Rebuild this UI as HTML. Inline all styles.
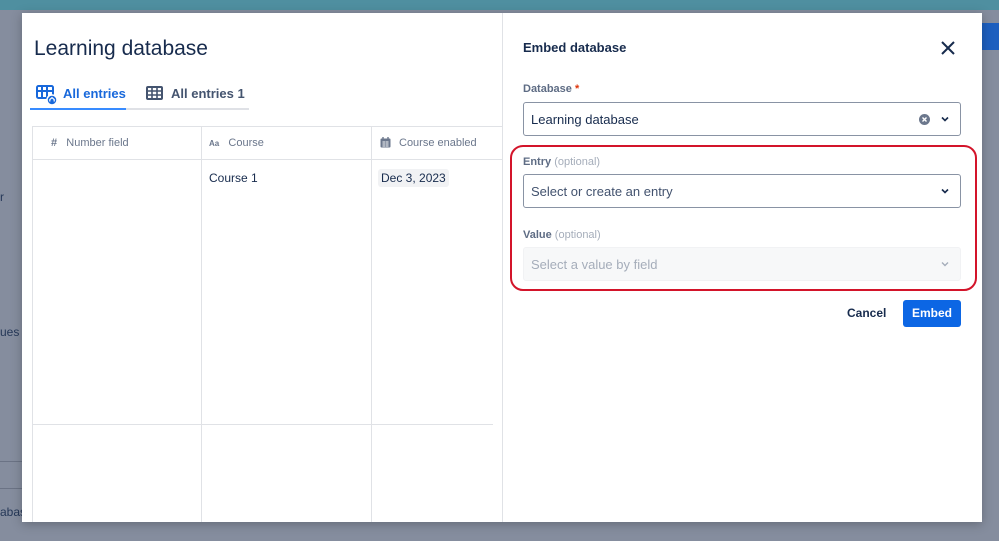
<!DOCTYPE html>
<html><head><style>
*{box-sizing:border-box;margin:0;padding:0}
body{width:999px;height:541px;overflow:hidden;background:#858d9e;font-family:"Liberation Sans",sans-serif;position:relative;color:#172b4d}
.top{position:absolute;left:0;top:0;width:999px;height:10px;background:#4f8fa0}
.modal{position:absolute;left:22px;top:13px;width:960px;height:509px;background:#fff;box-shadow:0 2px 10px rgba(0,0,0,.25)}
.abs{position:absolute}
.vl{position:absolute;width:1px;background:#e0e2e6}
.hl{position:absolute;height:1px;background:#e0e2e6}
.lbl{font-size:11px;color:#5e6c84;font-weight:bold}
.opt{color:#a5adba;font-weight:normal}
.inp{position:absolute;left:501px;width:438px;height:34px;border:1px solid #8993a4;border-radius:3px;font-size:13px;padding:9px 7px}
.chev{position:absolute;right:11px;top:13px}
</style></head><body>
<div class="top"></div>
<div class="abs" style="left:967px;top:23px;width:32px;height:27px;background:#1d5fbf"></div>
<div class="abs" style="left:0;top:461px;width:22px;height:1px;background:#6b7385"></div>
<div class="abs" style="left:0;top:488px;width:22px;height:1px;background:#6b7385"></div>
<div class="abs" style="left:0;top:505px;font-size:12px;color:#253858">abas</div>
<div class="abs" style="left:0;top:325px;font-size:12px;color:#253858">ues</div>
<div class="abs" style="left:0;top:190px;font-size:12px;color:#253858">r</div>
<div class="modal">
 <div class="abs" style="left:12px;top:24px;font-size:21px;color:#172b4d">Learning database</div>
 <svg class="abs" style="left:14px;top:72px" width="22" height="22" viewBox="0 0 22 22"><rect x="1" y="1" width="16" height="12" rx="1.5" fill="none" stroke="#1868db" stroke-width="2"/><path d="M1 6h16M6 1v12M11 1v12" stroke="#1868db" stroke-width="2"/><circle cx="16" cy="15" r="5" fill="#1868db" stroke="#fff" stroke-width="1.5"/><path d="M13.8 16.5v-2l2.2-1.8 2.2 1.8v2" stroke="#fff" stroke-width="1.2" fill="none"/></svg>
 <div class="abs" style="left:41px;top:73px;font-size:13px;color:#1868db;font-weight:bold">All entries</div>
 <div class="abs" style="left:8px;top:95px;width:96px;height:2px;background:#388bff"></div>
 <div class="abs" style="left:104px;top:95px;width:123px;height:2px;background:#dfe1e6"></div>
 <svg class="abs" style="left:124px;top:73px" width="17" height="14" viewBox="0 0 17 14"><rect x="1" y="1" width="15" height="12" rx="1" fill="none" stroke="#44546f" stroke-width="2"/><path d="M1 5h15M1 9h15M6 1v12M11 1v12" stroke="#44546f" stroke-width="1.6"/></svg>
 <div class="abs" style="left:149px;top:73px;font-size:13px;color:#44546f;font-weight:bold">All entries 1</div>
 <div class="hl" style="left:10px;top:113px;width:470px"></div>
 <div class="hl" style="left:10px;top:146px;width:470px"></div>
 <div class="hl" style="left:10px;top:411px;width:461px"></div>
 <div class="vl" style="left:10px;top:113px;height:396px"></div>
 <div class="vl" style="left:179px;top:113px;height:396px"></div>
 <div class="vl" style="left:349px;top:113px;height:396px"></div>
 <div class="vl" style="left:480px;top:0;height:509px"></div>
 <div class="abs" style="left:29px;top:124px;font-size:11px;color:#6b778c"><b>#</b>&nbsp;&nbsp; Number field</div>
 <div class="abs" style="left:187px;top:124px;font-size:11px;color:#6b778c"><span style="font-size:8px;font-weight:bold">Aa</span>&nbsp;&nbsp; Course</div>
 <svg class="abs" style="left:358px;top:124px" width="11" height="11" viewBox="0 0 11 11"><rect x="0.5" y="1.5" width="10" height="9" rx="1" fill="#6b778c"/><path d="M3 0v3M8 0v3" stroke="#6b778c" stroke-width="1.4"/><path d="M2 5h7M2 7h7M2 9h7M4 4v6M7 4v6" stroke="#fff" stroke-width="0.6"/></svg>
 <div class="abs" style="left:377px;top:124px;font-size:11px;color:#6b778c">Course enabled</div>
 <div class="abs" style="left:187px;top:158px;font-size:12px;color:#172b4d">Course 1</div>
 <div class="abs" style="left:356px;top:156px;padding:2px 3px;background:#f1f2f4;border-radius:3px;font-size:12px;color:#172b4d">Dec 3, 2023</div>

 <div class="abs" style="left:501px;top:27px;font-size:13px;font-weight:bold;color:#172b4d">Embed database</div>
 <svg class="abs" style="left:919px;top:28px" width="14" height="14" viewBox="0 0 14 14"><path d="M1 1l12 12M13 1L1 13" stroke="#172b4d" stroke-width="2"/></svg>
 <div class="abs lbl" style="left:501px;top:70px">Database <span style="color:#de350b">*</span></div>
 <div class="inp" style="top:89px;color:#172b4d">Learning database
  <svg class="abs" style="right:30px;top:11px" width="11" height="11" viewBox="0 0 11 11"><circle cx="5.5" cy="5.5" r="5.5" fill="#6b778c"/><path d="M3.5 3.5l4 4M7.5 3.5l-4 4" stroke="#fff" stroke-width="1.4"/></svg>
  <svg class="chev" width="8" height="6" viewBox="0 0 8 6"><path d="M1 1.5l3 3 3-3" stroke="#172b4d" stroke-width="1.6" fill="none"/></svg></div>
 <div class="abs" style="left:488px;top:132px;width:467px;height:146px;border:2px solid #d3142a;border-radius:13px"></div>
 <div class="abs lbl" style="left:501px;top:143px">Entry <span class="opt">(optional)</span></div>
 <div class="inp" style="top:161px;color:#42526e">Select or create an entry<svg class="chev" width="8" height="6" viewBox="0 0 8 6"><path d="M1 1.5l3 3 3-3" stroke="#172b4d" stroke-width="1.6" fill="none"/></svg></div>
 <div class="abs lbl" style="left:501px;top:216px">Value <span class="opt">(optional)</span></div>
 <div class="inp" style="top:234px;border-color:#f1f2f4;background:#f7f8f9;color:#a5adba">Select a value by field<svg class="chev" width="8" height="6" viewBox="0 0 8 6"><path d="M1 1.5l3 3 3-3" stroke="#a5adba" stroke-width="1.4" fill="none"/></svg></div>
 <div class="abs" style="left:825px;top:293px;font-size:12px;font-weight:bold;color:#172b4d">Cancel</div>
 <div class="abs" style="left:881px;top:287px;width:58px;height:27px;background:#0c66e4;border-radius:3px;color:#fff;font-size:12px;font-weight:bold;text-align:center;line-height:27px">Embed</div>
</div>
</body></html>
